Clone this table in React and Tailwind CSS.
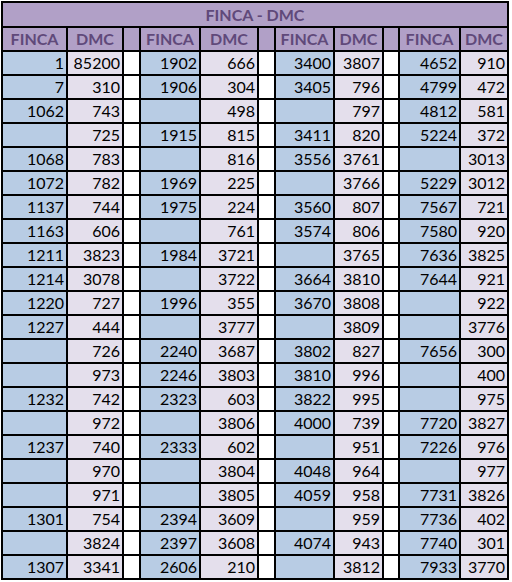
import React from "react";

const sets = [
  [
    ["1", "85200"], ["7", "310"], ["1062", "743"], ["", "725"], ["1068", "783"], ["1072", "782"],
    ["1137", "744"], ["1163", "606"], ["1211", "3823"], ["1214", "3078"], ["1220", "727"], ["1227", "444"],
    ["", "726"], ["", "973"], ["1232", "742"], ["", "972"], ["1237", "740"], ["", "970"], ["", "971"],
    ["1301", "754"], ["", "3824"], ["1307", "3341"],
  ],
  [
    ["1902", "666"], ["1906", "304"], ["", "498"], ["1915", "815"], ["", "816"], ["1969", "225"],
    ["1975", "224"], ["", "761"], ["1984", "3721"], ["", "3722"], ["1996", "355"], ["", "3777"],
    ["2240", "3687"], ["2246", "3803"], ["2323", "603"], ["", "3806"], ["2333", "602"], ["", "3804"],
    ["", "3805"], ["2394", "3609"], ["2397", "3608"], ["2606", "210"],
  ],
  [
    ["3400", "3807"], ["3405", "796"], ["", "797"], ["3411", "820"], ["3556", "3761"], ["", "3766"],
    ["3560", "807"], ["3574", "806"], ["", "3765"], ["3664", "3810"], ["3670", "3808"], ["", "3809"],
    ["3802", "827"], ["3810", "996"], ["3822", "995"], ["4000", "739"], ["", "951"], ["4048", "964"],
    ["4059", "958"], ["", "959"], ["4074", "943"], ["", "3812"],
  ],
  [
    ["4652", "910"], ["4799", "472"], ["4812", "581"], ["5224", "372"], ["", "3013"], ["5229", "3012"],
    ["7567", "721"], ["7580", "920"], ["7636", "3825"], ["7644", "921"], ["", "922"], ["", "3776"],
    ["7656", "300"], ["", "400"], ["", "975"], ["7720", "3827"], ["7226", "976"], ["", "977"],
    ["7731", "3826"], ["7736", "402"], ["7740", "301"], ["7933", "3770"],
  ],
];

function Header({ children }) {
  return (
    <div className="h-[22px] bg-[#b1a0c7] flex items-center justify-center font-bold text-[#60497a] text-[16px] leading-none">
      {children}
    </div>
  );
}

function Cell({ children, blue }) {
  return (
    <div
      className={
        "h-[22px] flex items-center justify-end pr-[2px] text-[16px] leading-none text-black " +
        (blue ? "bg-[#b8cce4]" : "bg-[#e4dfec]")
      }
    >
      {children}
    </div>
  );
}

export default function App() {
  const rows = sets[0].map((_, i) => i);
  return (
    <div className="w-[512px] h-[582px] bg-white font-[Lato,sans-serif] overflow-hidden">
      <div className="ml-[1px] mt-[1px] w-[508px] bg-black p-[2px] grid grid-cols-[63px_54px_15px_58px_56px_15px_57px_47px_14px_59px_46px] gap-[2px]">
        <div className="col-span-11 h-[23px] bg-[#b1a0c7] flex items-center justify-center font-bold text-[#60497a] text-[16px] leading-none">
          FINCA - DMC
        </div>
        {sets.map((_, s) => (
          <React.Fragment key={"h" + s}>
            <Header>FINCA</Header>
            <Header>DMC</Header>
            {s < 3 && <div className="h-[22px] bg-[#b1a0c7]" />}
          </React.Fragment>
        ))}
        {rows.map((r) => (
          <React.Fragment key={r}>
            {sets.map((set, s) => (
              <React.Fragment key={s}>
                <Cell blue>{set[r][0]}</Cell>
                <Cell>{set[r][1]}</Cell>
                {s < 3 && <div className="h-[22px] bg-white" />}
              </React.Fragment>
            ))}
          </React.Fragment>
        ))}
      </div>
    </div>
  );
}
